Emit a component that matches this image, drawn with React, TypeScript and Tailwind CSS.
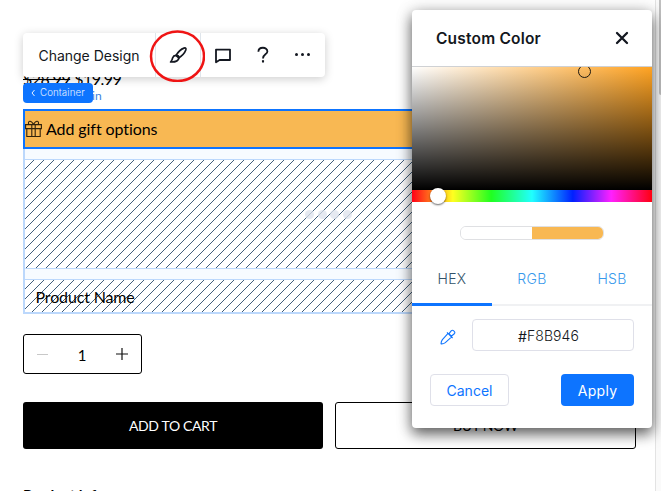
import React from "react";

function Hatch({ id, shift }: { id: string; shift: number }) {
  return (
    <svg className="block h-full w-full" aria-hidden="true">
      <defs>
        <pattern id={id} width="10" height="10" patternUnits="userSpaceOnUse" patternTransform={`translate(${shift} 0)`}>
          <path d="M-1 11 L11 -1 M-1 1 L1 -1 M9 11 L11 9" stroke="#3f5c7a" strokeWidth="1" />
        </pattern>
      </defs>
      <rect width="100%" height="100%" fill={`url(#${id})`} />
    </svg>
  );
}

function Toolbar() {
  return (
    <div className="absolute left-[23px] top-[33px] z-10 flex h-11 w-[302px] items-center rounded bg-white shadow-[0_2px_10px_rgba(0,0,0,0.2)]">
      <div className="flex h-full w-[133px] items-center border-r border-[#dfe5eb] pl-[15.5px] font-[Inter,sans-serif] text-[14px] tracking-[-0.02px] whitespace-nowrap text-[#131720]">
        Change Design
      </div>
      <div className="relative flex h-full w-[45px] items-center justify-center border-r border-[#dfe5eb]">
        <svg width="20" height="20" viewBox="0 0 20 20" fill="none" stroke="#131720" strokeWidth="1.7" strokeLinejoin="round">
          <path d="M8 10.4Q11.5 4.6 16 3.1Q18.6 2.4 17.8 5Q16.2 9.4 10.7 13Z" />
          <path d="M8 10.4Q11.2 10.3 10.9 13Q10.2 17.3 2.6 17Q4.3 15.2 4.7 12.7Q5.4 10.6 8 10.4Z" />
        </svg>
        <svg className="absolute -left-[7px] -top-[3px]" width="56" height="52" viewBox="0 0 56 52" fill="none">
          <ellipse cx="28.5" cy="26.3" rx="26.5" ry="24.7" stroke="#ef1414" strokeWidth="2.5" />
        </svg>
      </div>
      <div className="flex w-11 justify-center">
        <svg width="18" height="18" viewBox="0 0 18 18" fill="none" stroke="#131720" strokeWidth="1.8" strokeLinejoin="round">
          <path d="M2 3.6h14v10.4H5.6L2 16.2Z" />
        </svg>
      </div>
      <div className="flex w-9 justify-center">
        <svg width="14" height="20" viewBox="0 0 14 20" fill="none" stroke="#131720" strokeWidth="1.8">
          <path d="M2.4 6.7C2.4 1.4 11.5 1.5 11.4 6.5C11.3 9.5 7 9.3 7 13.4" />
          <path d="M7 15.2v2.3" strokeWidth="2.1" />
        </svg>
      </div>
      <div className="flex w-11 justify-center">
        <svg width="18" height="6" viewBox="0 0 18 6" fill="#131720">
          <circle cx="2.5" cy="2.5" r="1.5" />
          <circle cx="8.5" cy="2.5" r="1.5" />
          <circle cx="14.5" cy="2.5" r="1.5" />
        </svg>
      </div>
    </div>
  );
}

function ColorPanel() {
  return (
    <div className="absolute left-[412px] top-[10px] z-20 flex h-[418px] w-[240px] flex-col rounded bg-white font-[Inter,sans-serif] shadow-[0_0_18px_rgba(0,0,0,0.15),0_6px_14px_rgba(0,0,0,0.6)]">
      <div className="flex h-[57px] shrink-0 items-center justify-between border-b border-[#cfd1d4] pr-[23px] pl-6">
        <h2 className="pt-px text-[15.5px] font-semibold tracking-[0.2px] whitespace-nowrap text-[#131720]">Custom Color</h2>
        <svg width="14" height="14" viewBox="0 0 14 14" stroke="#131720" strokeWidth="2.3" strokeLinecap="round">
          <path d="m2 2 10 10M12 2 2 12" />
        </svg>
      </div>
      <div className="relative h-[123px] shrink-0 overflow-hidden bg-[linear-gradient(to_top,#000,transparent),linear-gradient(to_right,#fff,#ffa322)]">
        <div className="absolute -top-[2px] left-[166px] size-[13px] rounded-full border-[1.5px] border-[#1c1710]" />
      </div>
      <div className="relative h-3 shrink-0 bg-[linear-gradient(to_right,#ff0018,#ffff20_17%,#20ff20_33%,#20ffff_50%,#0020ff_67%,#ff20ff_83%,#ff0010)]">
        <div className="absolute -top-[2px] left-[18px] size-4 rounded-full bg-white shadow-[0_1px_2px_rgba(0,0,0,0.6)]" />
      </div>
      <div className="mx-auto mt-6 flex h-[14px] w-36 shrink-0 overflow-hidden rounded-[6px] border border-[#dfe0e3]">
        <div className="w-1/2 bg-white" />
        <div className="w-1/2 bg-[#f8b853]" />
      </div>
      <div className="mt-[13px] grid h-[53px] shrink-0 grid-cols-3 border-b-2 border-[#f0f1f3] text-center text-[14px] leading-[52px] font-light tracking-[0.3px] text-[#3899ec]">
        <div className="h-[53px] border-b-[3px] border-[#0d74ff] text-[#32536a]">HEX</div>
        <div>RGB</div>
        <div>HSB</div>
      </div>
      <div className="mt-[13px] flex items-center justify-between pr-[18px] pl-7">
        <svg width="16" height="16" viewBox="0 0 16 16" fill="none" stroke="#0d74ff" strokeWidth="1.1" className="mt-[3px]">
          <path d="m7.8 4.6-5.4 6Q.9 12.6 1.1 14.9Q3.4 15.1 5.3 13.6L11.4 8.2M7 3.4l5.6 5.6M9 4.7l2.4-3q1.1-1 2.6.4t.3 2.7l-3 2.4Z" strokeLinejoin="round" />
        </svg>
        <div className="flex h-8 w-[162px] items-center justify-center rounded border border-[#dfe0e9] pr-[9px] text-[14px] font-light tracking-[0.1px] text-[#131720]"><span className="relative top-px font-normal">#</span>F8B946</div>
      </div>
      <div className="mt-[23px] flex items-center justify-between px-[18px] text-[14px]">
        <button className="h-8 w-[79px] rounded border border-[#dfe0e9] text-[#0d74ff]">Cancel</button>
        <button className="h-8 w-[73px] rounded bg-[#0d74ff] tracking-[0.3px] text-white">Apply</button>
      </div>
    </div>
  );
}

export default function App() {
  return (
    <div className="relative flex h-[491px] w-[661px] overflow-hidden bg-white font-[Lato,sans-serif] text-black">
      <main className="w-[655px] shrink-0 pt-[68px] pl-[23px]">
        <div className="flex h-[22px] items-center gap-1 text-[16px] tracking-[-0.5px]">
          <span className="line-through">$28.99</span>
          <span>$19.99</span>
        </div>
        <div className="h-[19px] pl-[69px] text-[12px] leading-[11px] text-[#3b82df]">in</div>
        <section className="h-10 w-[613px] border-2 border-[#0d74ff] bg-[#f8b853]">
          <div className="flex h-full items-center gap-1 text-[16px] tracking-[-0.08px]">
            <svg width="17" height="18" viewBox="0 0 17 18" fill="none" stroke="#30220c" strokeWidth="1.1">
              <path d="M.6 4.6h15.8v4H.6ZM1.8 8.6h13.4v7.9H1.8ZM6.8 4.6v11.9M10.2 4.6v11.9M8.5 4.5C6-.5 2.5.7 3.7 4.5M8.5 4.5C11-.5 14.5.7 13.3 4.5" />
            </svg>
            <span>Add gift options</span>
          </div>
        </section>
        <section className="h-[165px] w-[613px] border-x-2 border-b-2 border-[#bcd8fc] bg-[#f7fbff] pt-[10px]">
          <div className="relative h-[110px] border-y border-[#bcd8fc] bg-white">
            <Hatch id="hatch-form" shift={-1} />
            <div className="absolute top-[50px] left-[280px] flex gap-[3.5px]">
              <i className="size-[9px] rounded-full bg-[#dce2ec]/75" />
              <i className="size-[9px] rounded-full bg-[#dce2ec]/75" />
              <i className="size-[9px] rounded-full bg-[#dce2ec]/75" />
              <i className="size-[9px] rounded-full bg-[#dce2ec]/75" />
            </div>
          </div>
          <div className="relative mt-[10px] h-[33px] border-t border-[#bcd8fc] bg-white">
            <Hatch id="hatch-name" shift={-1} />
            <span className="absolute top-[5px] left-[10.5px] text-[16px] leading-6 tracking-[-0.15px]">Product Name</span>
          </div>
        </section>
        <div className="mt-5 flex h-10 w-[119px] items-center justify-between rounded-[3px] border border-black px-[13px]">
          <span className="h-px w-[11px] bg-[#c8c8c8]" />
          <span className="pt-[3px] text-[15px]">1</span>
          <svg width="12" height="12" viewBox="0 0 12 12" stroke="#111" strokeWidth="1.2"><path d="M6 0v12M0 6h12" /></svg>
        </div>
        <div className="mt-7 flex gap-3 text-[14px] tracking-[-0.35px]">
          <button className="h-[47px] w-[300px] rounded-[3px] bg-black text-white">ADD TO CART</button>
          <button className="h-[47px] w-[301px] rounded-[3px] border border-black">BUY NOW</button>
        </div>
        <h3 className="mt-[34px] text-[15px] leading-6 font-bold tracking-[-0.1px]">Product info</h3>
      </main>
      <div className="flex w-[6px] justify-end border-l border-[#e3e3e3] bg-[#fafafa]">
        <div className="h-[95px] w-[2px] rounded-bl bg-[#c1c1c1]" />
      </div>
      <Toolbar />
      <div className="absolute top-[83px] left-[23px] z-10 flex h-5 w-[70px] items-center gap-[5px] rounded bg-[#0d74ff] pl-2 font-[Inter,sans-serif] text-[9.7px] font-light tracking-[0.1px] text-white/90">
        <svg width="4" height="8" viewBox="0 0 4 8" fill="none" stroke="currentColor"><path d="M3.5 1 1 4l2.5 3" /></svg>
        Container
      </div>
      <ColorPanel />
    </div>
  );
}
